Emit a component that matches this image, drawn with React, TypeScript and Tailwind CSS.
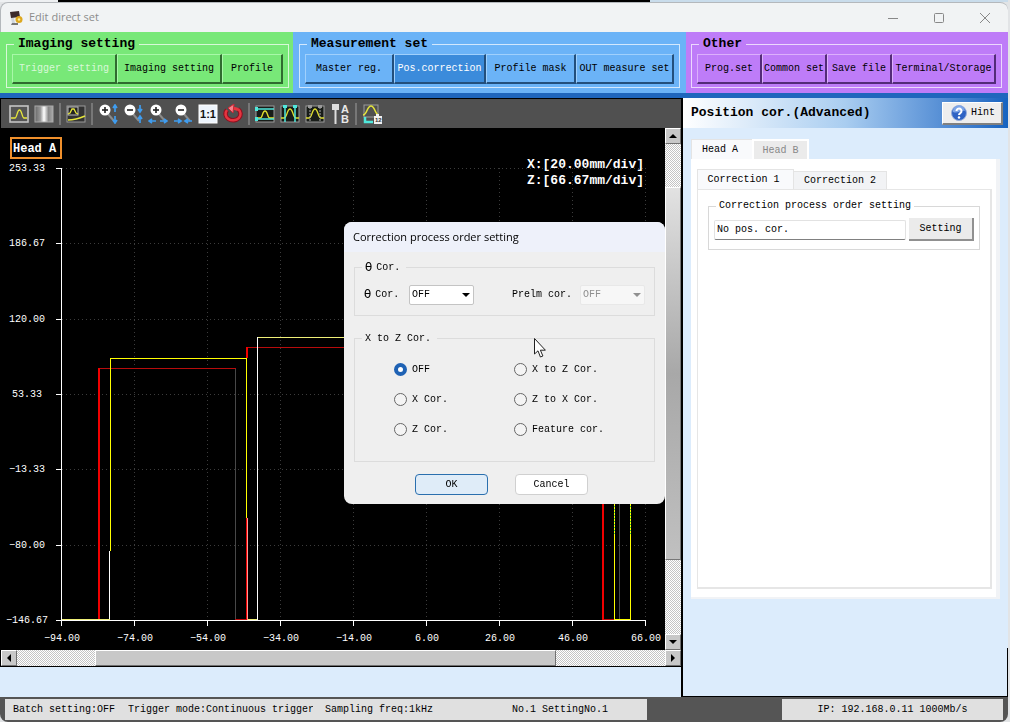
import React from "react";
import clsx from "clsx";

const MONO = "font-['Liberation_Mono',monospace]";
const SANS = "font-['Open_Sans',sans-serif]";

interface MenuGroupProps {
	title: string;
	items: string[];
	active?: string;
	muted?: string;
	className: string;
	columns: string;
	buttonClass: string;
}

function MenuGroup({
	title,
	items,
	active,
	muted,
	className,
	columns,
	buttonClass,
}: MenuGroupProps) {
	return (
		<div className={clsx("pt-1 pb-[5px]", className)}>
			<fieldset className="min-w-0 border border-white/70 px-[5px] pt-0.5 pb-[3px]">
				<legend className="ml-0.5 px-1 text-[13px] leading-4 font-bold">
					{title}
				</legend>
				<div className={clsx("grid h-[30px]", columns)}>
					{items.map((item) => (
						<button
							key={item}
							type="button"
							className={clsx(
								"overflow-hidden border-t border-r-2 border-b-2 border-l whitespace-nowrap",
								buttonClass,
								item === active && "bg-[#3b8bdb] text-white",
								item === muted && "text-[#d8f8d8]",
							)}
						>
							{item}
						</button>
					))}
				</div>
			</fieldset>
		</div>
	);
}

function ToolButton({
	label,
	children,
}: {
	label: string;
	children: React.ReactNode;
}) {
	return (
		<button type="button" aria-label={label} className="size-5 shrink-0">
			<svg viewBox="0 0 20 20" className="size-5" fill="none">
				{children}
			</svg>
		</button>
	);
}

function Separator() {
	return <span className="h-[22px] w-0.5 shrink-0 bg-[#777777]" />;
}

function Magnifier({ x, minus }: { x: number; minus?: boolean }) {
	return (
		<g>
			<path d={`M${x + 3} 10l6 7`} stroke="#8b8b8b" strokeWidth="2" />
			<circle cx={x} cy="6" r="5.5" fill="#fff" />
			<path d={`M${x - 3} 6h6`} stroke="#222" strokeWidth="1.6" />
			{!minus && <path d={`M${x} 3v6`} stroke="#222" strokeWidth="1.6" />}
		</g>
	);
}

function Toolbar() {
	return (
		<div className="flex h-[30px] items-center gap-[5px] overflow-hidden border-t border-l border-black bg-[#505050] pl-2">
			<ToolButton label="Profile view">
				<rect x="1" y="2" width="18" height="16" fill="#555" stroke="#c4c4c4" strokeWidth="1.6" />
				<path d="M2 14h4c2 0 2-8 4.5-8s2.5 8 4.5 8h3" stroke="#e6e63c" strokeWidth="1.3" />
			</ToolButton>
			<ToolButton label="Gray view">
				<defs>
					<linearGradient id="gray">
						<stop offset="0" stopColor="#6a6a6a" />
						<stop offset=".3" stopColor="#999" />
						<stop offset=".5" stopColor="#fff" />
						<stop offset=".75" stopColor="#888" />
						<stop offset="1" stopColor="#aaa" />
					</linearGradient>
				</defs>
				<rect x="1" y="2" width="18" height="16" fill="url(#gray)" stroke="#aaa" />
			</ToolButton>
			<Separator />
			<ToolButton label="Trend view">
				<rect x="1" y="2" width="18" height="16" fill="#333" stroke="#999" />
				<rect x="2" y="3" width="10" height="8" fill="#222" stroke="#bbb" />
				<path d="M2 10l2-1 2-4h2l2 4 2 1" stroke="#e6e63c" strokeWidth="1.3" />
				<path d="M2 16c7 0 10-1 17-4" stroke="#e6e63c" strokeWidth="1.5" />
			</ToolButton>
			<Separator />
			<ToolButton label="Zoom in vertically">
				<Magnifier x={7} />
				<path d="M17 1v7M17 12v7M15 4l2-3 2 3M15 16l2 3 2-3" stroke="#3f9df0" strokeWidth="1.7" />
			</ToolButton>
			<ToolButton label="Zoom out vertically">
				<Magnifier x={7} minus />
				<path d="M17 1v7M17 12v7M15 5l2 3 2-3M15 15l2-3 2 3" stroke="#3f9df0" strokeWidth="1.7" />
			</ToolButton>
			<ToolButton label="Zoom in horizontally">
				<Magnifier x={8} />
				<path d="M1 17h7M12 17h7M4 15l-3 2 3 2M16 15l3 2-3 2" stroke="#3f9df0" strokeWidth="1.7" />
			</ToolButton>
			<ToolButton label="Zoom out horizontally">
				<Magnifier x={8} minus />
				<path d="M1 17h7M12 17h7M5 15l3 2-3 2M15 15l-3 2 3 2" stroke="#3f9df0" strokeWidth="1.7" />
			</ToolButton>
			<ToolButton label="Actual size">
				<rect x="1" y="1" width="18" height="18" fill="#edf4fc" stroke="#fff" />
				<text x="10" y="14" textAnchor="middle" fontSize="11" fontWeight="700" fill="#111" className="font-['Liberation_Sans',sans-serif]">
					1:1
				</text>
			</ToolButton>
			<ToolButton label="Reset">
				<path d="M4 6a7.5 6.5 0 1 0 11-1" stroke="#8d1020" strokeWidth="4.5" />
				<path d="M4 6a7.5 6.5 0 1 0 11-1" stroke="#e5353f" strokeWidth="2.5" />
				<path d="M15 5.5L10 4" stroke="#e5353f" strokeWidth="3" />
				<path d="M5 4l6-4-1 9z" fill="#f3818a" stroke="#c92633" />
			</ToolButton>
			<Separator />
			<ToolButton label="Height range">
				<rect x="1" y="2" width="18" height="16" fill="#181c18" stroke="#999" />
				<path d="M2 14h3c3 0 2-7 5-7s2 7 5 7h4" stroke="#dede30" strokeWidth="1.3" />
				<path d="M1 5h18M1 15h18" stroke="#50e8dc" strokeWidth="1.5" />
				<path d="M0 3h3v4H0zM0 13h3v4H0z" fill="#50e8dc" />
			</ToolButton>
			<ToolButton label="Width range">
				<rect x="1" y="2" width="18" height="16" fill="#181c18" stroke="#999" />
				<path d="M1 14h3c3 0 3-9 6-9s3 9 6 9h3" stroke="#dede30" strokeWidth="1.3" />
				<path d="M5 3v15M15 3v15" stroke="#50e8dc" strokeWidth="1.5" />
				<path d="M3 1h4v3H3zM13 1h4v3h-4z" fill="#50e8dc" />
			</ToolButton>
			<ToolButton label="Mask range">
				<rect x="1" y="2" width="18" height="16" fill="#181c18" stroke="#999" />
				<path d="M1 14h3c3 0 3-9 6-9s3 9 6 9h3" stroke="#dede30" strokeWidth="1.3" />
				<path d="M5 3v15M15 3v15" stroke="#aaa" strokeDasharray="2 1" />
				<path d="M3 1h4v3H3zM13 1h4v3h-4z" fill="#999" />
			</ToolButton>
			<ToolButton label="Head labels">
				<path d="M2 0h7v6H2z" fill="#ddd" />
				<path d="M5.5 5v15" stroke="#ddd" strokeWidth="2" />
				<text x="11" y="9" fontSize="11" fontWeight="700" fill="#e8e8e8" className="font-['Liberation_Sans',sans-serif]">A</text>
				<text x="11" y="19" fontSize="11" fontWeight="700" fill="#e8e8e8" className="font-['Liberation_Sans',sans-serif]">B</text>
			</ToolButton>
			<Separator />
			<ToolButton label="Save profile">
				<rect x="2" y="1" width="14" height="12" stroke="#9a9a9a" />
				<path d="M1 11c4 0 4-9 8-9s4 9 8 9" stroke="#e6e63c" strokeWidth="1.5" />
				<path d="M3 13v5h8" stroke="#50e8dc" strokeWidth="2.5" />
				<path d="M12 12h2v-2h3v2h3v8h-8z" fill="#f0f0f0" />
				<text x="13" y="18" fontSize="6" fontWeight="700" fill="#333" className="font-['Liberation_Sans',sans-serif]">12</text>
			</ToolButton>
		</div>
	);
}

const yLabels = ["253.33", "186.67", "120.00", "53.33", "−13.33", "−80.00", "−146.67"];
const xLabels = ["−94.00", "−74.00", "−54.00", "−34.00", "−14.00", "6.00", "26.00", "46.00", "66.00"];
const yTicks = [40, 115, 191, 266, 341, 417, 492];

function Chart() {
	return (
		<svg
			viewBox="0 0 665 522"
			preserveAspectRatio="xMinYMin meet"
			className={clsx("min-h-0 min-w-0 flex-1 bg-black", MONO)}
			fill="none"
			shapeRendering="crispEdges"
		>
			<g stroke="#3c3c3c" strokeDasharray="1 3">
				{yTicks.slice(0, 6).map((y) => (
					<path key={y} d={`M62 ${y + 0.5}H646`} />
				))}
				{xLabels.slice(1).map((x, i) => (
					<path key={x} d={`M${134.5 + i * 73} 40V492`} />
				))}
			</g>
			<path d="M235.5 241v250M619.5 375v116" stroke="#484848" />
			<path d="M235 491.5h12M603 491.5h12M246 219.5h98" stroke="#b80c0c" />
			<path d="M99 240.5h137" stroke="#b80c0c" />
			<path d="M99 492V240M603 375v117M247 230v-11" stroke="#f00000" strokeWidth="2" />
			<path d="M110.5 423V230.5H246.5V390M614.5 375V491.5H630.5V375" stroke="#ffff00" />
			<path d="M614.5 375v32M630.5 375v32" stroke="#30c830" strokeDasharray="1 2" />
			<path d="M62 491.5h48M247 491.5h11M257 209.5h88" stroke="#f0f078" />
			<path d="M109.5 491V423M257.5 492V209" stroke="#fff" />
			<path d="M246.5 390v102" stroke="#f00000" />
			<path d="M247.5 390v102" stroke="#ff9a9a" />
			<path d="M61.5 40v457M61 492.5h585" stroke="#fff" />
			<g stroke="#fff">
				{yTicks.map((y) => (
					<path key={y} d={`M56 ${y + 0.5}h6`} />
				))}
				{xLabels.map((x, i) => (
					<path key={x} d={`M${61.5 + i * 73} 492v6`} />
				))}
			</g>
			<g fill="#fff" fontSize="10" textAnchor="middle">
				{yLabels.map((label, i) => (
					<text key={label} x="27" y={yTicks[i] + 3}>
						{label}
					</text>
				))}
				{xLabels.map((label, i) => (
					<text key={label} x={62 + i * 73} y="513">
						{label}
					</text>
				))}
			</g>
			<rect x="11" y="10" width="50" height="20" stroke="#f0902c" strokeWidth="2" />
			<g fill="#fff" fontWeight="700">
				<text x="13" y="24" fontSize="12">Head A</text>
				<text x="644" y="40" fontSize="13" textAnchor="end">X:[20.00mm/div]</text>
				<text x="644" y="56" fontSize="13" textAnchor="end">Z:[66.67mm/div]</text>
			</g>
		</svg>
	);
}

const RAISED =
	"border border-t-white border-l-white border-r-[#707070] border-b-[#707070] bg-[#c8c8c8]";
const TRACK =
	"bg-[repeating-conic-gradient(#c4c4c4_0_25%,#ffffff_0_50%)] bg-[length:2px_2px]";

function ScrollArrow({ label, d }: { label: string; d: string }) {
	return (
		<button
			type="button"
			aria-label={label}
			className={clsx("grid size-4 shrink-0 place-items-center", RAISED)}
		>
			<svg viewBox="0 0 8 8" className="size-2">
				<path d={d} fill="#000" />
			</svg>
		</button>
	);
}

function VerticalScrollbar() {
	return (
		<div className={clsx("flex w-4 flex-col", TRACK)}>
			<ScrollArrow label="Scroll up" d="M0 6l4-4 4 4z" />
			<div className="grid flex-1 grid-rows-[43fr_373fr_74fr]">
				<div className="row-start-2 border border-t-white border-r-[#777777] border-b-[#777777] border-l-white bg-linear-to-b from-[#e2e2e2] via-[#a8a8a8] to-[#c0c0c0]" />
			</div>
			<ScrollArrow label="Scroll down" d="M0 2h8l-4 4z" />
		</div>
	);
}

function HorizontalScrollbar() {
	return (
		<div className={clsx("flex h-[17px] border-b border-l border-black", TRACK)}>
			<ScrollArrow label="Scroll left" d="M6 0v8l-4-4z" />
			<div className="grid flex-1 grid-cols-[78fr_461fr_109fr]">
				<div className={clsx("col-start-2", RAISED)} />
			</div>
			<ScrollArrow label="Scroll right" d="M2 0v8l4-4z" />
		</div>
	);
}

function PositionPanel() {
	return (
		<aside className="relative flex w-[327px] shrink-0 flex-col border-b border-l-2 border-black bg-[#dcecfc]">
			<div className="flex h-[30px] items-center justify-between bg-linear-to-r from-white via-[#a9cdf0] to-[#1463c0] pr-[5px] pl-2">
				<h2 className="text-[13px] font-bold">Position cor.(Advanced)</h2>
				<button
					type="button"
					className="flex h-[23px] w-[61px] items-center gap-1 border border-t-white border-r-2 border-r-[#808080] border-b-2 border-b-[#808080] border-l-white bg-[#eeeeee] pl-2"
				>
					<svg viewBox="0 0 16 16" className="size-4">
						<circle cx="8" cy="8" r="7.5" fill="#2f63c4" stroke="#96aedb" />
						<path d="M2 7a6 6 0 0 1 12-1c-4-1-7 3-12 1z" fill="#7da5e8" />
						<path d="M5.5 6a2.5 2.5 0 1 1 4 2c-1 .7-1.5 1-1.5 2" stroke="#fff" strokeWidth="2" fill="none" />
						<circle cx="8" cy="12.5" r="1.2" fill="#fff" />
					</svg>
					Hint
				</button>
			</div>
			<div className="px-2 pt-[11px]">
				<div className="flex items-stretch">
					<button type="button" className="h-5 w-[61px] border-t border-l border-[#e4e4e4] bg-[#f9fafc] pr-1">
						Head A
					</button>
					<button type="button" disabled className="h-5 w-[57px] border-2 border-b-0 border-white bg-[#ebebeb] text-[#888888]">
						Head B
					</button>
				</div>
				<div className="border-r-4 border-b-2 border-[#f1f3f6] bg-white pt-2.5 pr-1 pb-2 pl-1.5">
					<div className="flex items-end">
						<button type="button" className="h-5 w-[97px] border border-b-0 border-[#e4e4e4] bg-[#f9fafc] pr-1">
							Correction 1
						</button>
						<button type="button" className="h-[18px] w-[93px] border border-b-0 border-l-0 border-[#e4e4e4] bg-[#f2f3f5]">
							Correction 2
						</button>
					</div>
					<div className="h-[400px] border-t border-r-2 border-b-2 border-l border-[#e6e6e6] bg-white px-2.5 pt-2">
						<fieldset className="min-w-0 border border-[#d8d8d8] px-[5px] pb-2">
							<legend className="ml-0.5 px-[3px] leading-4">
								Correction process order setting
							</legend>
							<div className="flex items-center gap-[3px] pt-1">
								<input
									aria-label="Correction process order"
									readOnly
									value="No pos. cor."
									className="h-5 min-w-0 flex-1 rounded-xs border border-[#e2e2e2] border-b-[#808080] px-0.5"
								/>
								<button
									type="button"
									className="h-[23px] w-[65px] border-r-2 border-b-2 border-[#909090] bg-[#ebebeb]"
								>
									Setting
								</button>
							</div>
						</fieldset>
					</div>
				</div>
			</div>
			<div className="absolute right-0 bottom-0 h-12 border-r border-black" />
		</aside>
	);
}

function OffSelect({ id, disabled }: { id: string; disabled?: boolean }) {
	return (
		<div className={clsx("grid items-center", disabled ? "text-[#909090]" : "text-black")}>
			<select
				id={id}
				disabled={disabled}
				className={clsx(
					"col-start-1 row-start-1 h-5 w-[65px] appearance-none rounded-xs border pl-0.5",
					disabled ? "border-[#e8e8e8] bg-[#f7f7f7]" : "border-[#c4c4c4] bg-white",
				)}
			>
				<option>OFF</option>
			</select>
			<svg viewBox="0 0 8 4" className="pointer-events-none col-start-1 row-start-1 mr-1 h-1 w-2 justify-self-end">
				<path d="M0 0h8L4 4z" fill="currentColor" />
			</svg>
		</div>
	);
}

const orders = ["OFF", "X to Z Cor.", "X Cor.", "Z to X Cor.", "Z Cor.", "Feature cor."];

function OrderDialog() {
	return (
		<div className="pointer-events-none fixed inset-0 flex items-center justify-center pt-[3px] pr-px">
			<div
				role="dialog"
				aria-labelledby="dialog-title"
				className="pointer-events-auto relative flex w-[321px] flex-col overflow-hidden rounded-lg bg-[#efefef]"
			>
				<h2 id="dialog-title" className={clsx("h-[30px] bg-[#eef1fa] pl-[9px] text-[11px] leading-[30px]", SANS)}>
					Correction process order setting
				</h2>
				<div className="px-2.5 pt-2 pb-[9px]">
					<fieldset className="min-w-0 border border-[#dcdcdc] px-[9px] pb-2.5">
						<legend className="-ml-0.5 flex gap-1 px-[3px] pr-1.5 leading-4">
							<span className="text-[12px]">Ɵ</span> Cor.
						</legend>
						<div className="flex items-center pt-[9px]">
							<label htmlFor="theta" className="flex w-[45px] items-center gap-1">
								<span className="text-[12px]">Ɵ</span> Cor.
							</label>
							<OffSelect id="theta" />
							<label htmlFor="prelim" className="ml-auto pr-2">
								Prelm cor.
							</label>
							<OffSelect id="prelim" disabled />
						</div>
					</fieldset>
					<fieldset className="mt-[15px] min-w-0 border border-[#dcdcdc] px-[9px] pb-4">
						<legend className="-ml-0.5 px-[3px] pr-1.5 leading-4">X to Z Cor.</legend>
						<div className="grid grid-cols-[120px_1fr] pt-2 pl-[30px]">
							{orders.map((order) => (
								<label key={order} className="flex h-[30px] items-center gap-[5px]">
									<input
										type="radio"
										name="order"
										defaultChecked={order === "OFF"}
										className="size-[13px] appearance-none rounded-full border border-[#666666] bg-[#f4f4f4] checked:border-4 checked:border-[#1f62b4] checked:bg-white"
									/>
									{order}
								</label>
							))}
						</div>
					</fieldset>
					<div className="mt-3 flex justify-center gap-[27px] pr-1.5">
						<button type="button" className="h-[21px] w-[73px] rounded-sm border border-[#2a6fae] bg-[#dfecf8]">
							OK
						</button>
						<button type="button" className="h-[21px] w-[73px] rounded-sm border border-[#d0d0d0] bg-white">
							Cancel
						</button>
					</div>
				</div>
				<svg viewBox="0 0 12 20" className="absolute top-[116px] left-[190px] h-5 w-3">
					<path d="M.5.5v15.5l3.5-3.200L6.400 19l2.500-1-2.500-5.800h5z" fill="#fff" stroke="#222" />
				</svg>
			</div>
		</div>
	);
}

function TitleBar() {
	return (
		<header className={clsx("flex h-[30px] items-center rounded-t-lg border-t border-l border-[#b4b8bc] bg-[#f1f3f4] pl-2 text-[11px] text-[#8c8c8c]", SANS)}>
			<svg viewBox="0 0 14 14" className="mr-1.5 size-3.5">
				<path d="M1 1l9-1 1 6-9 1z" fill="#3b2a2c" />
				<path d="M2 7h3l1 5H3z" fill="#cfd6dd" />
				<path d="M3 12h6v2H2z" fill="#777" />
				<circle cx="10" cy="8.5" r="3.5" fill="#dda81f" />
				<circle cx="10" cy="8.5" r="1.2" fill="#fff1a0" />
			</svg>
			<h1 className="flex-1">Edit direct set</h1>
			<div className="flex gap-9 pr-[18px]">
				<button type="button" aria-label="Minimize">
					<svg viewBox="0 0 10 10" className="size-2.5" stroke="#888" fill="none"><path d="M0 5.5h10" /></svg>
				</button>
				<button type="button" aria-label="Maximize">
					<svg viewBox="0 0 10 10" className="size-2.5" stroke="#888" fill="none"><rect x=".5" y=".5" width="9" height="9" rx="1" /></svg>
				</button>
				<button type="button" aria-label="Close">
					<svg viewBox="0 0 10 10" className="size-2.5" stroke="#888" fill="none"><path d="M0 0l10 10M10 0L0 10" /></svg>
				</button>
			</div>
		</header>
	);
}

function StatusBar() {
	return (
		<footer className="flex h-[25px] justify-between rounded-b-lg bg-[#555555] px-[5px] pt-0.5 pb-0.5 whitespace-nowrap">
			<div className="flex w-[642px] items-center bg-[#e0e0e0] pl-2">
				<span className="w-[115px]">Batch setting:OFF</span>
				<span className="w-[185px] overflow-hidden">Trigger mode:Continuous trigger</span>
				<span className="ml-3 w-[187px]">Sampling freq:1kHz</span>
				<span>No.1 SettingNo.1</span>
			</div>
			<div className="flex w-[221px] items-center justify-center bg-[#e0e0e0]">
				IP: 192.168.0.11 1000Mb/s
			</div>
		</footer>
	);
}

function App() {
	return (
		<div className={clsx("flex min-h-screen flex-col bg-[#e2e4e6] pr-0.5 text-[10px] text-black", MONO)}>
			<div className="flex h-0.5">
				<div className="w-[58px] bg-[#eef0f2]" />
				<div className="w-[592px] bg-black" />
				<div className="flex-1 bg-[#c9dceb]" />
			</div>
			<TitleBar />
			<nav className="grid grid-cols-[293fr_393fr_322fr] border-b-[5px] border-[#1f66bd]">
				<MenuGroup
					title="Imaging setting"
					items={["Trigger setting", "Imaging setting", "Profile"]}
					muted="Trigger setting"
					className="bg-[#78e878] pr-1 pl-1.5"
					columns="grid-cols-[105fr_105fr_61fr]"
					buttonClass="border-t-[#a8f8a8] border-l-[#a8f8a8] border-r-[#2f6b2f] border-b-[#2f6b2f]"
				/>
				<MenuGroup
					title="Measurement set"
					items={["Master reg.", "Pos.correction", "Profile mask", "OUT measure set"]}
					active="Pos.correction"
					className="bg-[#6bb3f7] px-1.5"
					columns="grid-cols-[89fr_92fr_90fr_98fr]"
					buttonClass="border-t-[#a0d0fc] border-l-[#a0d0fc] border-r-[#234f7c] border-b-[#234f7c]"
				/>
				<MenuGroup
					title="Other"
					items={["Prog.set", "Common set", "Save file", "Terminal/Storage"]}
					className="bg-[#be7cf8] pr-1.5 pl-[5px]"
					columns="grid-cols-[65fr_65fr_65fr_104fr]"
					buttonClass="border-t-[#dcb0fc] border-l-[#dcb0fc] border-r-[#532b78] border-b-[#532b78]"
				/>
			</nav>
			<main className="flex flex-1">
				<section className="flex min-w-0 flex-1 flex-col bg-[#dcecfc] pb-[30px]">
					<Toolbar />
					<div className="flex min-h-0 flex-1">
						<Chart />
						<VerticalScrollbar />
					</div>
					<HorizontalScrollbar />
				</section>
				<PositionPanel />
			</main>
			<StatusBar />
			<OrderDialog />
		</div>
	);
}

export default App;
